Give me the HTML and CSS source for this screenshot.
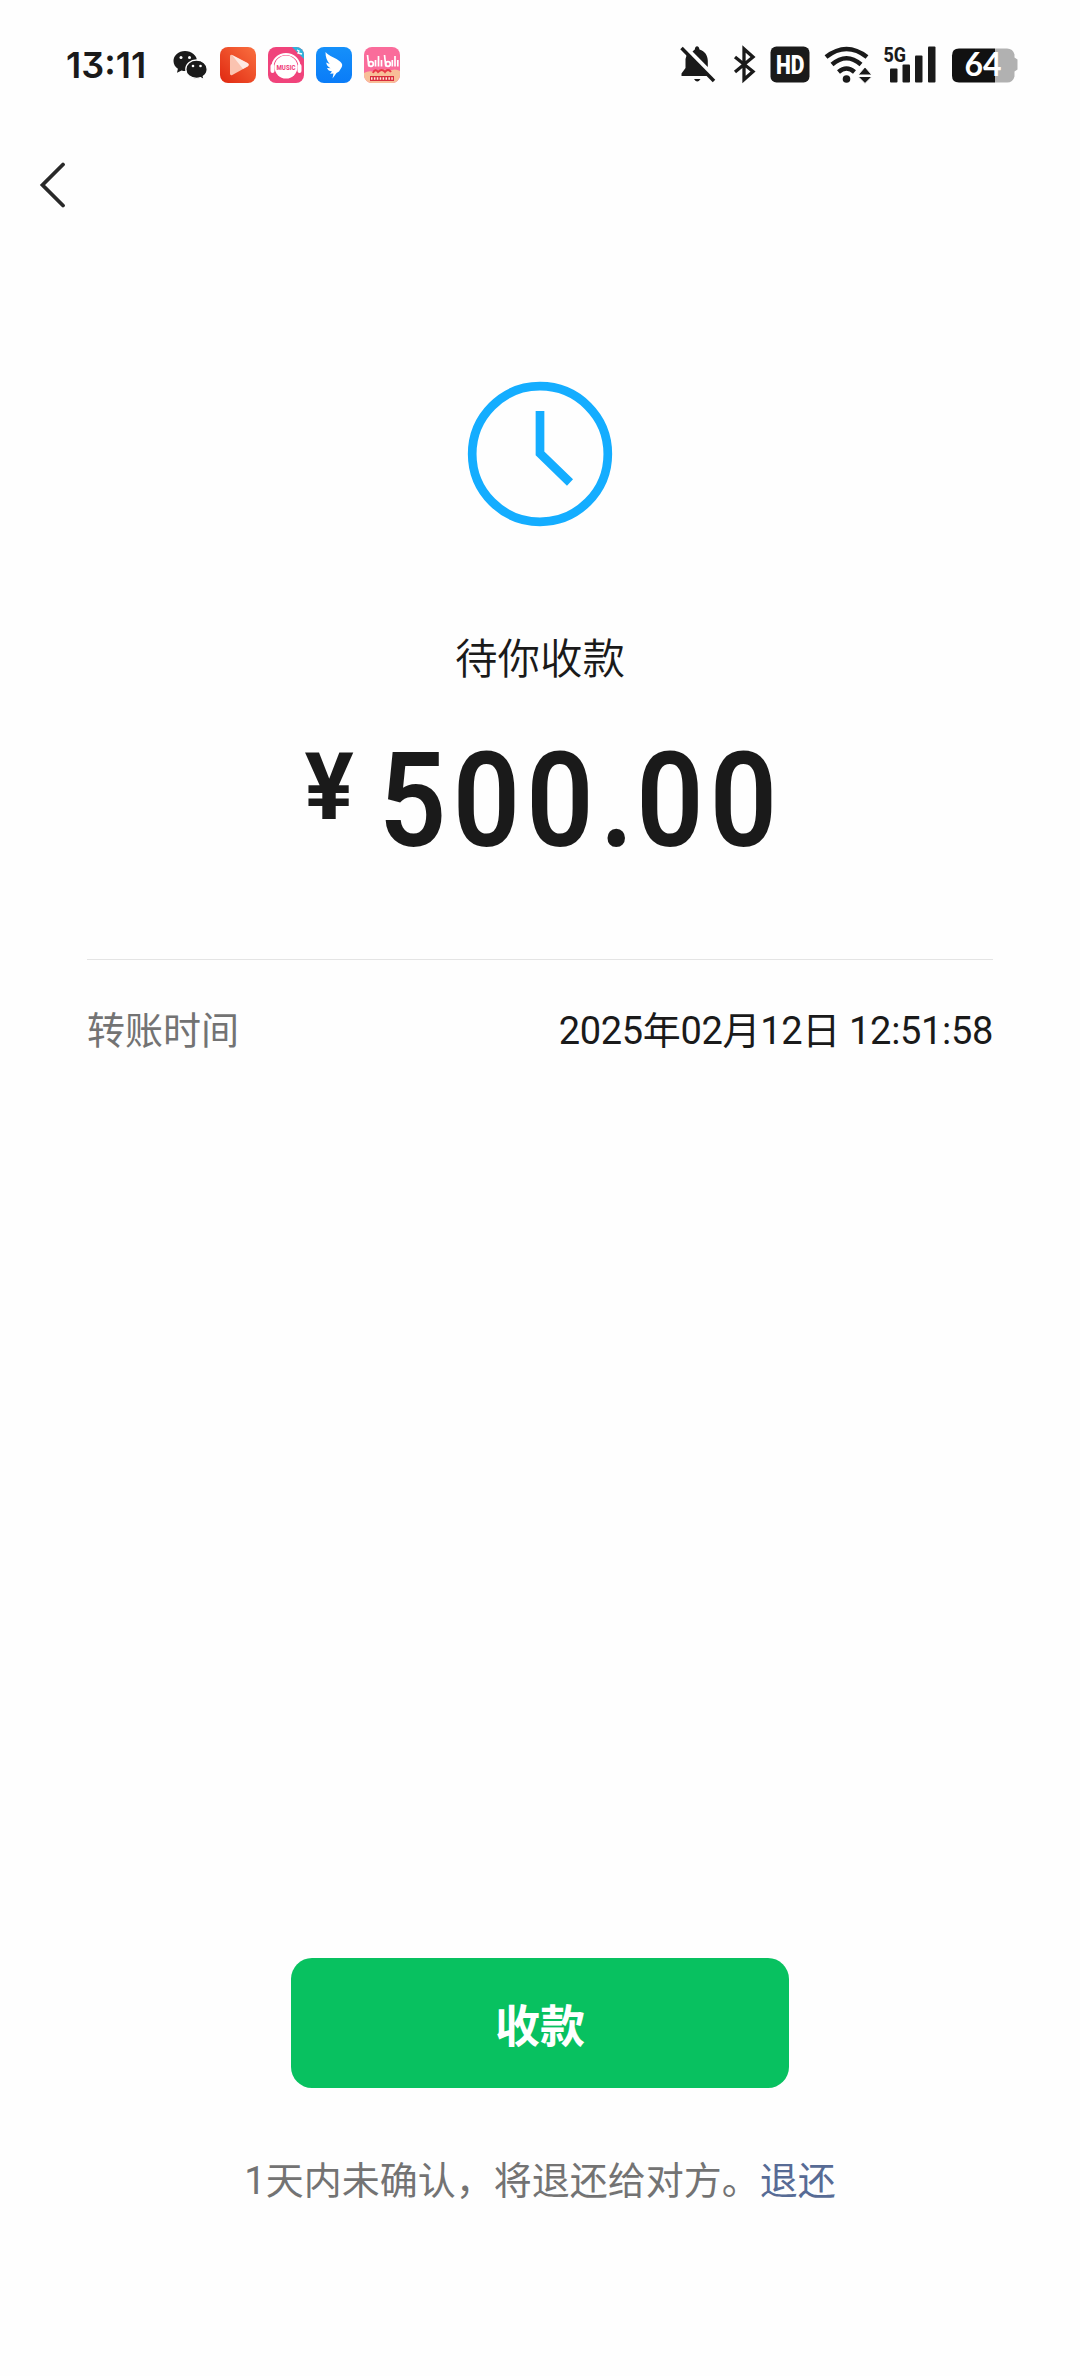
FILE: index.html
```html
<!DOCTYPE html>
<html lang="zh-CN">
<head>
    <meta charset="UTF-8">
    <meta name="viewport" content="width=device-width, initial-scale=1.0">
    <title>待你收款</title>
    <link rel="stylesheet" href="styles.css">
</head>
<body>
    <div class="status-bar">
        <span class="time">13:11</span>
        <div class="apps">
            <!-- wechat -->
            <svg class="wechat" width="35" height="32" viewBox="0 0 35 32">
                <path fill="#1a1a1a" d="M12 1C5.500 1 .5 5.500 .5 11c0 3.200 1.700 6 4.400 7.800L4 22.800l4.600-2.400c1.100.4 2.200.6 3.400.6C18.500 21 24 16.500 24 11S18.500 1 12 1z"/>
                <path fill="#1a1a1a" stroke="#fff" stroke-width="1.300" d="M23.500 10c-6 0-10.700 4-10.700 9.200s4.700 9.200 10.700 9.200c1.400 0 2.800-.3 4-.7l3.800 2.200-1-3.500c2.400-1.700 3.900-4.200 3.900-7.200 0-5.200-4.700-9.200-10.700-9.200z"/>
                <g fill="#fff"><circle cx="8" cy="7.500" r="1.500"/><circle cx="16.500" cy="7.500" r="1.500"/><circle cx="20" cy="16" r="1.300"/><circle cx="27.500" cy="16" r="1.300"/></g>
            </svg>
            <!-- video -->
            <svg width="36" height="36" viewBox="0 0 36 36">
                <defs><linearGradient id="red" x1="0" y1="1" x2="1" y2="0"><stop offset="0" stop-color="#e02810"/><stop offset="1" stop-color="#fa7040"/></linearGradient></defs>
                <rect width="36" height="36" rx="8" fill="url(#red)"/>
                <path fill="#fbc3b0" d="M10 9.500q0-2.500 2.300-1.400L28 16.300q1.800 1.500 0 3L12.300 28q-2.300 1-2.300-1.500z"/>
                <path fill="#fff" opacity=".65" d="M12 8l16 8.300q1.800 1.500 0 3L23 22z"/>
            </svg>
            <!-- music -->
            <svg width="36" height="36" viewBox="0 0 36 36">
                <defs><clipPath id="round"><rect width="36" height="36" rx="8"/></clipPath></defs>
                <g clip-path="url(#round)">
                    <rect width="36" height="36" fill="#f0437b"/>
                    <path fill="#2cb4dc" d="M24 0h12v12z"/>
                    <path d="M29 3l2 1-1 2 4 1" fill="none" stroke="#fff" stroke-width="1.300"/>
                    <path d="M4.500 20a13.500 13 0 0 1 27 0" fill="none" stroke="#fff" stroke-width="2"/>
                    <rect x="2.500" y="17" width="4" height="9" rx="2" fill="#fff"/>
                    <rect x="29.500" y="17" width="4" height="9" rx="2" fill="#fff"/>
                    <circle cx="18" cy="20" r="11.500" fill="#fff"/>
                    <text class="music-text" x="8.500" y="22.500" textLength="19" lengthAdjust="spacingAndGlyphs">MUSIC</text>
                </g>
            </svg>
            <!-- dingtalk -->
            <svg width="36" height="36" viewBox="0 0 36 36">
                <defs><linearGradient id="blue" x1="0" y1="1" x2="0" y2="0"><stop offset="0" stop-color="#0a7cf8"/><stop offset="1" stop-color="#1590fa"/></linearGradient></defs>
                <rect width="36" height="36" rx="8" fill="url(#blue)"/>
                <path fill="#fff" d="M9.500 5C13 9.500 20 10.500 24 14.500c2.500 2.200 2.700 3.700 1.500 6L23 24.500l-2.500 1.500L16.500 31.500l1-5-3.500.3 2-2.300c-2.500-.3-4.300-1.500-5-3.500l3.500.3c-2.700-1.500-4-3.300-4.300-5.800l3.500 1.500c-2.800-3.300-4.200-6.500-4.200-12z"/>
            </svg>
            <!-- bilibili -->
            <svg width="36" height="36" viewBox="0 0 36 36">
                <g clip-path="url(#round)">
                    <rect width="36" height="36" fill="#fa6c9b"/>
                    <path fill="#f8bf98" d="M0 26q5-3 10-1 8-5 15-1 6-3 11 0v12H0z"/>
                    <path d="M9 26q2-5 5-1 4-4 7 0 3-4 6 0" fill="none" stroke="#e83848" stroke-width="2"/>
                    <g fill="none" stroke="#fff" stroke-width="1.700">
                        <path d="M3.500 8l1.300 11.500M14.500 9v10.500M20.500 8l1.300 11.500M31 9v10.500M11.500 13v6.500M28.300 13v6.500M17.500 13v6.500M33.800 13v6.500"/>
                        <circle cx="7" cy="17" r="2.300"/><circle cx="24" cy="17" r="2.300"/>
                    </g>
                    <rect x="6" y="29" width="24" height="5" fill="#d92c3c"/>
                    <path d="M7 31.500h22" stroke="#ffe8d8" stroke-width="2.500" stroke-dasharray="1.500 1.400"/>
                </g>
            </svg>
        </div>
        <!-- muted bell, bluetooth, HD, wifi, 5G signal, battery -->
        <svg class="system" width="342" height="40" viewBox="0 0 342 40" fill="#1a1a1a">
            <path d="M7 9L29 31H1.500v-2.500L5.500 23v-9zM12.500 6.500l2.300-2c.2-4.500 4.200-4.500 4.700 0 5.500 1.800 8.300 6 8.300 11.500v6zM14 34h6.500q-3.200 5-6.500 0z"/>
            <path d="M1.500 3L34 36" stroke="#1a1a1a" stroke-width="3.500"/>
            <path d="M55 12l18 14.500-9 8V4l9 8-18 15" fill="none" stroke="#1a1a1a" stroke-width="3.300"/>
            <rect x="90.500" y="1.500" width="39" height="36" rx="6"/>
            <text class="hd" x="96" y="28.500" textLength="28.500" lengthAdjust="spacingAndGlyphs">HD</text>
            <g fill="none" stroke="#1a1a1a" stroke-width="4.500">
                <path d="M146 12q20.500-16 41 0M152 19.500q14.500-12.500 29 0M158.500 27q8-7 16 0"/>
            </g>
            <circle cx="166.500" cy="34" r="3.800"/>
            <path stroke="#fff" stroke-width="1" d="M178 30h14l-7-8zM178 31.500h14l-7 7z"/>
            <text class="net" x="203.500" y="16.500" textLength="22.500" lengthAdjust="spacingAndGlyphs">5G</text>
            <rect x="210" y="23.500" width="7.500" height="14" rx="1"/>
            <rect x="222.500" y="19.500" width="7.500" height="18" rx="1"/>
            <rect x="235" y="10.500" width="7.500" height="27" rx="1"/>
            <rect x="248" y="1.500" width="7.500" height="36" rx="1"/>
            <path fill="#b1b1b1" d="M315 3.500h12q6 0 7.500 6v3l3 2v10l-3 2v5q-1.500 6-7.500 6h-12z"/>
            <path fill="#111" d="M279 3.500h36v34h-36q-7 0-7-7v-20q0-7 7-7z"/>
            <text class="battery" x="303" y="31" text-anchor="middle">64</text>
        </svg>
    </div>

    <div class="nav">
        <svg width="30" height="48" viewBox="0 0 30 48">
            <path d="M24 4.500L3.500 25 24 45.500" fill="none" stroke="#292929" stroke-width="3.800" stroke-linecap="round"/>
        </svg>
    </div>

    <main class="container">
        <svg class="clock" width="146" height="146" viewBox="0 0 146 146" fill="none" stroke="#14adff" stroke-width="8.700">
            <circle cx="73" cy="73" r="67.800"/>
            <path d="M73 30v42.500l30 29"/>
        </svg>
        <h1>待你收款</h1>
        <div class="amount"><span class="currency">¥</span><span class="number">500<span class="dot">.</span>00</span></div>
        <div class="detail">
            <span class="label">转账时间</span>
            <span class="value">2025年02月12日 12:51:58</span>
        </div>
    </main>

    <footer>
        <button type="button">收款</button>
        <p>1天内未确认，将退还给对方。<a>退还</a></p>
    </footer>
</body>
</html>
```
FILE: styles.css
```css
* {
    margin: 0;
    padding: 0;
    box-sizing: border-box;
}

body {
    height: 2376px;
    display: flex;
    flex-direction: column;
    background: #fefefe;
    color: #1a1a1a;
    font-family: Roboto, 'Noto Sans CJK SC', sans-serif;
}

.status-bar {
    height: 130px;
    padding: 0 58px 0 66px;
    display: flex;
    align-items: center;
}

.time {
    width: 107px;
    font-family: Inter, sans-serif;
    font-size: 36px;
    font-weight: 600;
    font-feature-settings: 'cv09';
    white-space: nowrap;
}

.apps {
    flex: 1;
    display: flex;
    align-items: center;
    gap: 12px;
}

.wechat {
    margin-top: 2px;
}

.system {
    overflow: visible;
}

.music-text {
    fill: #f0437b;
    font-size: 7px;
    font-weight: 800;
}

.hd {
    fill: #fff;
    font-size: 25px;
    font-weight: 900;
}

.net {
    font-size: 21px;
    font-weight: 800;
}

.battery {
    fill: #fff;
    font-family: Lato, sans-serif;
    font-size: 32px;
    font-weight: 700;
}

.nav {
    height: 110px;
    padding: 30px 39px;
}

.container {
    padding: 141px 87px 0;
    display: flex;
    flex-direction: column;
    align-items: center;
}

h1 {
    margin-top: 101px;
    font-size: 42.5px;
    line-height: 64px;
    font-weight: 350;
}

.amount {
    width: 471px;
    margin-top: 33px;
    height: 234px;
    display: flex;
    align-items: flex-start;
}

.currency {
    flex: 0 0 74px;
    margin-top: 8px;
    font-size: 92px;
    line-height: 110px;
    font-weight: 700;
}

.number {
    font-size: 131px;
    line-height: 152px;
    font-weight: 600;
    letter-spacing: 7px;
    transform: scaleX(0.9);
    transform-origin: left;
}

.dot {
    letter-spacing: 3px;
}

.detail {
    width: 100%;
    padding-top: 43px;
    border-top: 1px solid #e4e4e4;
    display: flex;
    justify-content: space-between;
    font-size: 38px;
    line-height: 56px;
    font-weight: 390;
}

.label {
    color: #737373;
}

.value {
    letter-spacing: -0.33px;
}

footer {
    margin-top: auto;
    height: 418px;
    display: flex;
    flex-direction: column;
    align-items: center;
}

button {
    width: 498px;
    height: 130px;
    border: none;
    border-radius: 21px;
    background: #08c160;
    color: #fff;
    font-family: inherit;
    font-size: 45px;
    font-weight: 700;
}

footer p {
    margin-top: 65px;
    color: #737373;
    font-size: 38px;
    line-height: 56px;
    font-weight: 390;
}

footer a {
    color: #576b95;
}
```
